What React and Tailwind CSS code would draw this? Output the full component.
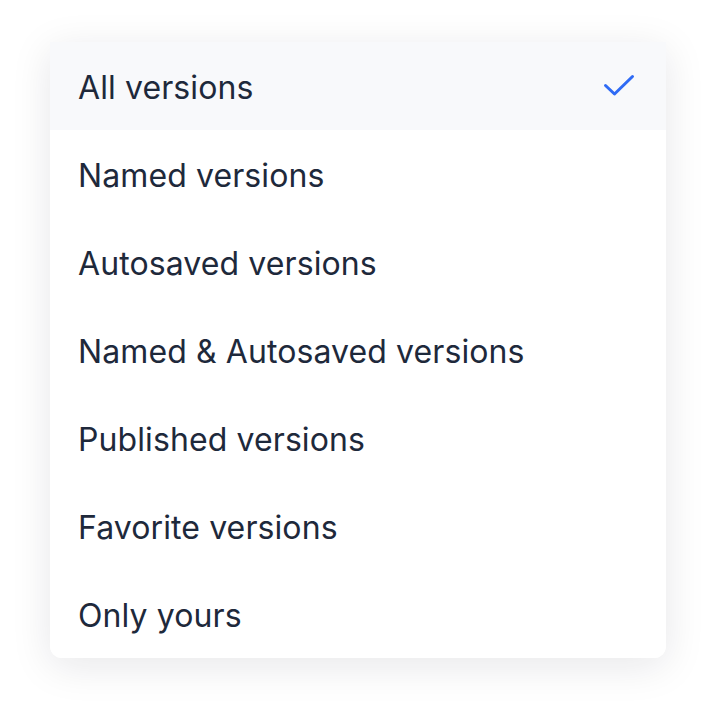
const OPTIONS = [
  "All versions",
  "Named versions",
  "Autosaved versions",
  "Named & Autosaved versions",
  "Published versions",
  "Favorite versions",
  "Only yours",
];

function CheckMark() {
  return (
    <svg width="34" height="26" viewBox="0 0 34 26" fill="none" className="shrink-0">
      <path
        d="M3.5 12.5 L12.5 21 L30.5 3.5"
        stroke="#2f6bf5"
        strokeWidth="3"
        strokeLinecap="round"
        strokeLinejoin="round"
      />
    </svg>
  );
}

export default function App() {
  const selected = 0;

  return (
    <div className="w-[716px] h-[716px] bg-white flex justify-center pt-[42px] font-['Inter',sans-serif]">
      <div className="w-[616px] h-[616px] bg-white rounded-b-xl overflow-hidden shadow-[0_8px_40px_rgba(15,23,42,0.10)] flex flex-col">
        {OPTIONS.map((label, i) => (
          <div
            key={label}
            className={`h-[88px] flex items-center justify-between pl-[28px] pr-[30px] ${
              i === selected ? "bg-[#f8f9fb]" : "bg-white"
            }`}
          >
            <span className="pt-[3px] text-[32px] font-normal text-[#1e293b] tracking-[0.1px]">{label}</span>
            {i === selected && <CheckMark />}
          </div>
        ))}
      </div>
    </div>
  );
}
